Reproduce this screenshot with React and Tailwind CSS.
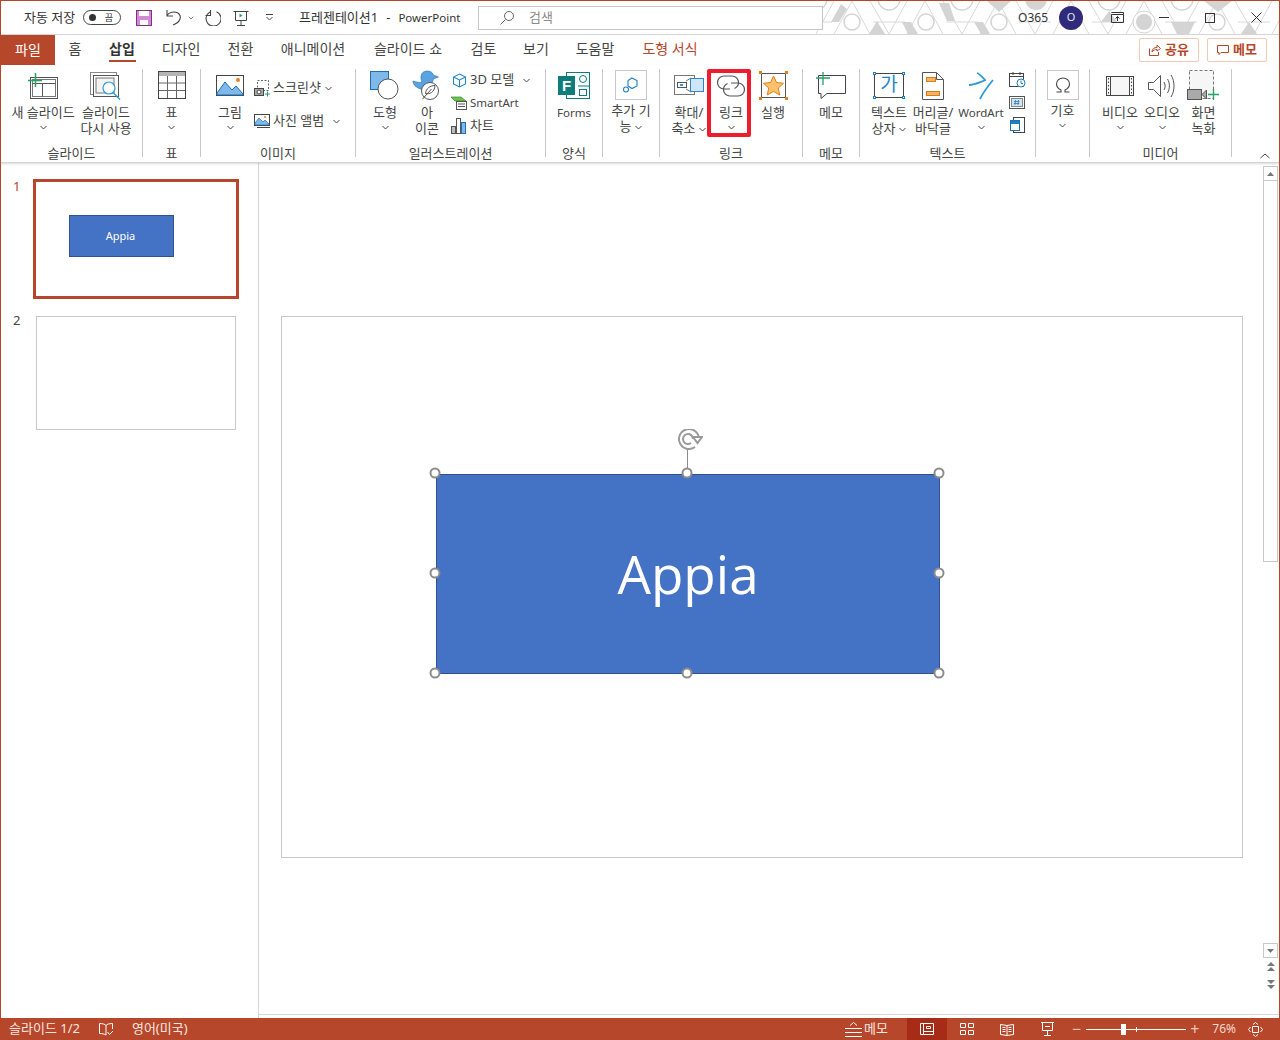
import { ChevronDown } from 'lucide-react';

const FONT = '"Noto Sans", "Noto Sans CJK KR", sans-serif';

const Latin = ({ children }) => <span className="text-[11.5px]">{children}</span>;

const Chev = ({ className = '' }) => (
    <svg width="7" height="5" viewBox="0 0 7 5" className={`inline-block ${className}`}>
        <path d="M.5 1 3.5 4 6.5 1" fill="none" stroke="#444" strokeWidth="1" />
    </svg>
);

const Btn = ({ w, icon, lines, chev, inline, top = 35 }) => (
    <div className="flex flex-col items-center shrink-0" style={{ width: w }}>
        <div className="flex items-center justify-center w-full pb-0.5" style={{ height: top }}>{icon}</div>
        {lines.map((l, i) => (
            <div key={i} className="h-4 leading-4 whitespace-nowrap">
                {l}{inline && i === lines.length - 1 && <Chev className="ml-1 align-middle" />}
            </div>
        ))}
        {chev && <div className="h-4 leading-3"><Chev /></div>}
    </div>
);

const Small = ({ icon, label, chev, className = '' }) => (
    <div className={`flex items-center h-5 whitespace-nowrap ${className}`}>
        <span className="w-5 flex justify-center mr-px">{icon}</span>
        {label}
        {chev}
    </div>
);

const Group = ({ w, label, children, last }) => (
    <div className={`h-[88px] shrink-0 ${last ? '' : 'border-r border-[#c8c8c8]'}`} style={{ width: w }}>
        <div className="h-[76px] flex">{children}</div>
        <div className="h-4 leading-4 text-center">{label}</div>
    </div>
);

const NewSlideIcon = () => (
    <svg width="32" height="28" viewBox="0 0 32 28">
        <rect x="3.5" y="5.5" width="27" height="21" fill="#fff" stroke="#555" />
        <rect x="5.5" y="7.5" width="23" height="17" fill="none" stroke="#777" />
        <path d="M5.5 11.5h23M15.5 11.5v13" stroke="#555" fill="none" />
        <path d="M1 8.5h14M8.5 1v14" stroke="#21a366" strokeWidth="1.5" />
    </svg>
);
const ReuseIcon = () => (
    <svg width="32" height="30" viewBox="0 0 32 30">
        <rect x="0.5" y="1.5" width="26" height="22" fill="none" stroke="#888" />
        <rect x="3.5" y="4.5" width="25" height="21" fill="#fff" stroke="#555" />
        <rect x="6" y="7" width="18" height="15" fill="#f3f3f3" stroke="#777" />
        <circle cx="19" cy="17" r="6" fill="#fff" stroke="#2e9bd6" strokeWidth="1.2" />
        <path d="m23 21.5 7 7" stroke="#2e9bd6" strokeWidth="1.4" />
    </svg>
);
const TableIcon = () => (
    <svg width="28" height="29" viewBox="0 0 28 29">
        <rect x="0.5" y="0.5" width="27" height="27" fill="#fff" stroke="#444" />
        <rect x="1" y="1" width="26" height="4" fill="#b5b5b5" />
        <path d="M1 12h26M1 19.5h26M9.5 5v22M18.5 5v22" stroke="#666" fill="none" />
    </svg>
);
const PictureIcon = () => (
    <svg width="28" height="22" viewBox="0 0 28 22">
        <rect x="0.5" y="0.5" width="27" height="20" fill="#fff" stroke="#444" />
        <path d="M1 18 9 7l7 8 4-4 7 8v1H1z" fill="#7fb8ea" stroke="#1f6fb2" />
        <circle cx="22" cy="5" r="2" fill="#e8801f" />
    </svg>
);
const ScreenshotIcon = () => (
    <svg width="16" height="17" viewBox="0 0 16 17">
        <rect x="3.5" y="0.5" width="11" height="10" fill="none" stroke="#666" strokeDasharray="2 1.5" />
        <rect x="0.5" y="8.5" width="9" height="7" fill="#aaa" stroke="#444" />
        <circle cx="5" cy="12" r="2" fill="#fff" stroke="#444" />
        <path d="M11 14h5M13.5 11.5v5" stroke="#21a366" />
    </svg>
);
const AlbumIcon = () => (
    <svg width="16" height="14" viewBox="0 0 16 14">
        <rect x="0.5" y="0.5" width="15" height="11" fill="#fff" stroke="#444" />
        <path d="M1 9 5 4l4 4 2-2 4 4v1H1z" fill="#7fb8ea" stroke="#1f6fb2" strokeWidth=".7" />
        <circle cx="11" cy="3" r="1" fill="#e8801f" />
        <path d="M3 13.5h13" stroke="#444" />
    </svg>
);
const ShapeIcon = () => (
    <svg width="30" height="30" viewBox="0 0 30 30">
        <rect x="0.5" y="0.5" width="18" height="18" fill="#7fb8ea" stroke="#1f6fb2" />
        <circle cx="18" cy="18" r="10" fill="#fff" stroke="#555" />
    </svg>
);
const IconsIcon = () => (
    <svg width="30" height="31" viewBox="0 0 30 31">
        <path d="M1 11c3 1 7 2 9 1-1-2-1-3-1-5C9 3 12 1 15.5 1c3 0 5 1.5 6 4l5 2-5 2c-1 4-3 7-6 9-2 2-4 3-7 1C3 17 1 14 1 11z" fill="#5ba3e0" stroke="#1f6fb2" strokeWidth=".6" />
        <circle cx="18" cy="21" r="8.5" fill="#fff" stroke="#555" />
        <path d="M23 15.5c-5 0-9 3-9.5 8 4 1 9-1 9.5-8zM10.5 29l9-10" stroke="#555" fill="none" />
    </svg>
);
const CubeIcon = () => (
    <svg width="15" height="15" viewBox="0 0 15 15" fill="none" stroke="#1f86c8" strokeWidth="1.1">
        <path d="M7.5 1 13.5 4v7l-6 3-6-3V4zM1.5 4l6 3 6-3M7.5 7v7" />
    </svg>
);
const SmartArtIcon = () => (
    <svg width="18" height="14" viewBox="0 0 18 14">
        <path d="M1 1h10l5 4H5z" fill="#6cc24a" stroke="#2f8a3a" strokeWidth=".7" />
        <rect x="6.5" y="5.5" width="10" height="8" fill="#fff" stroke="#555" />
        <path d="M8 8h7M8 10.5h7" stroke="#555" />
    </svg>
);
const ChartIcon = () => (
    <svg width="16" height="16" viewBox="0 0 16 16">
        <rect x="0.5" y="8.5" width="4" height="7" fill="#bbb" stroke="#555" />
        <rect x="5.5" y="0.5" width="4" height="15" fill="#fff" stroke="#555" />
        <rect x="10.5" y="4.5" width="4" height="11" fill="#7fb8ea" stroke="#1f6fb2" />
    </svg>
);
const FormsIcon = () => (
    <svg width="32" height="28" viewBox="0 0 32 28">
        <rect x="8.5" y="0.5" width="23" height="26" fill="#fff" stroke="#0e7c7b" />
        <path d="M20 14h11" stroke="#0e7c7b" />
        <circle cx="25" cy="7" r="3.5" fill="#fff" stroke="#0e7c7b" />
        <rect x="21.5" y="17.5" width="7" height="6" fill="#fff" stroke="#0e7c7b" />
        <rect x="0" y="4" width="17" height="19" fill="#0e7c7b" />
        <text x="8.5" y="19" fontSize="15" fontWeight="700" fill="#fff" textAnchor="middle" fontFamily="Liberation Sans">F</text>
    </svg>
);
const AddinIcon = () => (
    <div className="w-8 h-[30px] border border-[#c8c8c8] flex items-center justify-center">
        <svg width="18" height="18" viewBox="0 0 18 18" fill="none" stroke="#1f7fc4" strokeWidth="1.1">
            <path d="m10 2 5 2.5V10l-5 2.5L6 10V4.500z" />
            <circle cx="4" cy="13.5" r="2.5" fill="#fff" />
        </svg>
    </div>
);
const ZoomIcon = () => (
    <svg width="30" height="21" viewBox="0 0 30 21">
        <rect x="0.5" y="0.5" width="20" height="19" fill="#fff" stroke="#777" />
        <path d="M12 6 17 3M12 14l5 3" stroke="#777" />
        <rect x="3.5" y="7.5" width="9" height="5" fill="#fff" stroke="#555" />
        <rect x="6" y="9" width="3" height="2" fill="#2e9bd6" />
        <rect x="16.5" y="3.5" width="13" height="13" fill="#cfe6f7" stroke="#2e86c8" />
    </svg>
);
const LinkIcon = () => (
    <svg width="30" height="22" viewBox="0 0 30 22" fill="none" stroke="#555" strokeWidth="1.2">
        <path d="M14 14H8A6.5 6.5 0 0 1 8 1h8a6.5 6.5 0 0 1 6.5 6.5c0 3-2 5-4 6" />
        <path d="M15 8h7a6.5 6.5 0 0 1 0 13h-8a6.5 6.5 0 0 1-6.5-6.5c0-3 2-5 4-6" />
    </svg>
);
const ActionIcon = () => (
    <svg width="29" height="29" viewBox="0 0 29 29">
        <rect x="2.5" y="2.5" width="24" height="24" fill="#fff" stroke="#555" />
        <path d="m14.5 5 3 6.5 7 .8-5.2 4.700 1.400 7-6.200-3.500-6.200 3.500 1.400-7L4.500 12.300l7-.8z" fill="#fbc26b" stroke="#e0801f" />
        <g fill="#e0801f"><rect width="3" height="3" /><rect x="26" width="3" height="3" /><rect y="26" width="3" height="3" /><rect x="26" y="26" width="3" height="3" /></g>
    </svg>
);
const CommentIcon = () => (
    <svg width="30" height="28" viewBox="0 0 30 28">
        <path d="M2.5 3.5h27v18H11l-6 5v-5H2.500z" fill="#fff" stroke="#444" />
        <path d="M0 6h14M7 0v13" stroke="#21a366" strokeWidth="1.3" />
    </svg>
);
const TextBoxIcon = () => (
    <div className="relative w-8 h-7">
        <svg width="32" height="28" viewBox="0 0 32 28">
            <rect x="1.5" y="1.5" width="29" height="24" fill="#fff" stroke="#444" />
            <g fill="#fff" stroke="#1f7fc4"><rect x="0.5" y="0.5" width="2" height="2" /><rect x="29.5" y="0.5" width="2" height="2" /><rect x="0.5" y="24.5" width="2" height="2" /><rect x="29.5" y="24.5" width="2" height="2" /></g>
        </svg>
        <span className="absolute inset-0 flex items-center justify-center pb-0.5 text-[19px] leading-none text-[#1f86c8]">가</span>
    </div>
);
const HeaderIcon = () => (
    <svg width="22" height="28" viewBox="0 0 22 28">
        <path d="M.5.5h14l7 7v20H.5z" fill="#fff" stroke="#555" />
        <path d="M14.5.5v7h7" fill="none" stroke="#555" />
        <rect x="4.5" y="5.5" width="9" height="4" fill="#f5b461" stroke="#d97a1b" />
        <rect x="4.5" y="19.5" width="13" height="4" fill="#f5b461" stroke="#d97a1b" />
    </svg>
);
const WordArtIcon = () => (
    <svg width="26" height="28" viewBox="0 0 26 28" fill="none" stroke="#2e9bd6" strokeWidth="1.8">
        <path d="M9 1c3 1 5 4 8 7M1 13c6 0 11-3 17-5M25 8c-5 6-10 13-13 19" />
    </svg>
);
const DateIcon = () => (
    <svg width="17" height="16" viewBox="0 0 17 16">
        <rect x="0.5" y="1.5" width="14" height="13" fill="#fff" stroke="#444" />
        <path d="M1 4.5h13M4 0v3M11 0v3" stroke="#444" />
        <circle cx="12" cy="11" r="4" fill="#fff" stroke="#1f7fc4" />
        <path d="M12 8.5v3h2" stroke="#1f7fc4" fill="none" />
    </svg>
);
const NumberIcon = () => (
    <svg width="16" height="13" viewBox="0 0 16 13">
        <rect x="0.5" y="0.5" width="15" height="12" fill="#fff" stroke="#555" />
        <rect x="2.5" y="2.5" width="11" height="8" fill="#cfe6f7" stroke="#888" />
        <path d="M6.5 4 6 9M9.5 4 9 9M5 5.5h5.5M4.8 7.5h5.5" stroke="#1f6fb2" strokeWidth=".7" />
    </svg>
);
const ObjectIcon = () => (
    <svg width="15" height="17" viewBox="0 0 15 17">
        <rect x="3.5" y="0.5" width="11" height="15" fill="#fff" stroke="#444" />
        <rect x="0.5" y="3.5" width="9" height="10" fill="#fff" stroke="#1f6fb2" />
        <rect x="1" y="4" width="8" height="3" fill="#1f7fc4" />
    </svg>
);
const OmegaIcon = () => (
    <div className="w-8 h-[30px] border border-[#c8c8c8] flex items-center justify-center">
        <svg width="16" height="16" viewBox="0 0 16 16" fill="none" stroke="#444" strokeWidth="1.1">
            <path d="M1.5 15H6v-2C3 11.5 1.5 9.5 1.5 7c0-3.5 3-6 6.5-6s6.5 2.5 6.5 6c0 2.500-1.500 4.500-4.500 6v2h4.500" />
        </svg>
    </div>
);
const VideoIcon = () => (
    <svg width="28" height="20" viewBox="0 0 28 20">
        <rect x="0.5" y="0.5" width="27" height="19" fill="#f6f6f6" stroke="#444" />
        <path d="M4.5 1v18M23.5 1v18" stroke="#444" />
        <path d="M2.5 2v16M25.5 2v16" stroke="#444" strokeDasharray="1.5 2" />
    </svg>
);
const AudioIcon = () => (
    <svg width="28" height="26" viewBox="0 0 28 26" fill="none" stroke="#555">
        <path d="M.5 9.5h5l7-7v21l-7-7h-5z" fill="#fff" />
        <path d="M16 9c1.500 2.500 1.500 5.500 0 8M19.500 6c2.500 4 2.500 10 0 14M23 2c4 6 4 16 0 22" />
    </svg>
);
const RecordIcon = () => (
    <svg width="33" height="31" viewBox="0 0 33 31">
        <rect x="2.5" y="0.5" width="24" height="28" fill="#f6f6f6" stroke="#777" strokeDasharray="3 2" />
        <rect x="0.5" y="19.5" width="14" height="10" fill="#aaa" stroke="#555" />
        <path d="M15 24.5 19.5 20v9z" fill="#aaa" stroke="#555" />
        <path d="M21 24.5h11M26.5 19v11" stroke="#21a366" strokeWidth="1.3" />
    </svg>
);

const Handle = ({ className }) => (
    <div className={`absolute w-[11px] h-[11px] rounded-full bg-white border-2 border-[#8c8c8c] -translate-x-1/2 -translate-y-1/2 ${className}`} />
);

const TABS = [
    ['홈', 40], ['삽입', 54], ['디자인', 64], ['전환', 55], ['애니메이션', 90],
    ['슬라이드 쇼', 100], ['검토', 51], ['보기', 54], ['도움말', 64], ['도형 서식', 86],
];

// title bar backdrop, drawn with x measured from 817
const GREYS = [
    'M15 21 25 3l6 5-8 13z', 'M53 33l8-13 8 13z', 'M86 21h9l7 12H92z', 'M123 2h10l6 18h-8z',
    'M158 21h9l7 12h-9z', 'M171 0h24l-12 11z', 'M285 21l8-11 8 11z', 'M355 21h24l-6 12h-12z',
    'M388 0h28l-14 11z', 'M425 33l8-12 8 12z',
];
const RINGS = [36, 110, 183, 401];
const TOPS = [0, 73, 146, 293, 366];

const TitlePattern = () => (
    <svg className="absolute right-0 top-0" width="463" height="33" viewBox="0 0 463 33">
        <defs>
            <pattern id="hex" width="73" height="33" patternUnits="userSpaceOnUse">
                <path d="M0 33 18 0M54 0l19 33M18 33 36 0l18 33M0 21h16M57 21h16" fill="none" stroke="#d9d9d9" />
            </pattern>
        </defs>
        <rect width="463" height="33" fill="url(#hex)" />
        {GREYS.map(d => <path key={d} d={d} fill="#d4d4d4" />)}
        {RINGS.map(x => <circle key={x} cx={x} cy="21" r="8" fill="#fff" stroke="#d4d4d4" strokeWidth="1.5" />)}
        {TOPS.map(x => <circle key={x} cx={x} cy="-2" r="11" fill="#fff" stroke="#d4d4d4" strokeWidth="1.5" />)}
        <circle cx="220" cy="-2" r="11" fill="#d4d4d4" />
        <circle cx="328" cy="21" r="11" fill="#fff" stroke="#d4d4d4" />
        <circle cx="328" cy="21" r="8" fill="#d4d4d4" />
    </svg>
);

export default function App() {
    return (
        <div className="w-[1280px] h-[1040px] flex flex-col bg-white text-[13px] text-[#444] overflow-hidden border-x border-[#b7472a]" style={{ fontFamily: FONT }}>
            {/* title bar */}
            <div className="relative h-[35px] shrink-0 border-t border-b border-t-[#b7472a] border-b-[#d6d6d6] flex items-center text-[#333]">
                <TitlePattern />
                <span className="ml-[23px] w-[53px] whitespace-nowrap">자동 저장</span>
                <div className="ml-[6px] w-[38px] h-[15px] rounded-full border border-[#444] flex items-center justify-between pl-[5px] pr-[7px]">
                    <span className="w-[7px] h-[7px] rounded-full bg-[#333]" />
                    <span className="text-[9px] leading-none">끔</span>
                </div>
                <svg className="ml-[15px]" width="16" height="16" viewBox="0 0 16 16">
                    <rect x="0.5" y="0.5" width="15" height="15" fill="#d38ad6" stroke="#80307f" />
                    <rect x="3" y="1" width="10" height="5" fill="#fff" />
                    <rect x="4" y="10" width="8" height="5" fill="#fff" />
                </svg>
                <svg className="ml-[14px]" width="16" height="17" viewBox="0 0 16 17" fill="none" stroke="#444" strokeWidth="1.1">
                    <path d="M1 1v6h6M1 6.5C3 3 8 2 12 4c4 3 3 9-5 12" />
                </svg>
                <ChevronDown size={8} className="ml-[5px]" strokeWidth={2} />
                <svg className="ml-[9px]" width="17" height="17" viewBox="0 0 17 17" fill="none" stroke="#444" strokeWidth="1.1">
                    <path d="M6.5 1v5.5H1.5M6 3A7.5 7.5 0 1 0 12.5 2.7" />
                </svg>
                <svg className="ml-[12px]" width="16" height="16" viewBox="0 0 16 16">
                    <path d="M.5 1.5h15M2.5 1.5v9h11v-9M8 10.5V15M4 15.5h8" fill="none" stroke="#444" />
                    <path d="M6.5 3.5v4l3-2z" fill="#21a366" />
                </svg>
                <svg className="ml-[16px]" width="9" height="7" viewBox="0 0 9 7" fill="none" stroke="#444">
                    <path d="M1 .5h7M1.5 3 4.5 6l3-3" />
                </svg>
                <span className="ml-[25px] whitespace-nowrap">프레젠테이션1</span>
                <span className="ml-[8px]">-</span>
                <span className="ml-[8px] text-[11.5px]">PowerPoint</span>
                <div className="absolute left-[477px] top-[5px] w-[345px] h-6 border border-[#c6c6c6] bg-white flex items-center pl-5 text-[#8a8a8a]">
                    <svg width="16" height="16" viewBox="0 0 16 16" fill="none" stroke="#666">
                        <circle cx="10" cy="6" r="4.5" />
                        <path d="m6.5 9.5-5 5" />
                    </svg>
                    <span className="ml-[14px]">검색</span>
                </div>
                <div className="relative ml-auto flex items-center text-[12px]">
                    <span>O365</span>
                    <span className="ml-[11px] w-6 h-6 rounded-full bg-[#2f2a7a] text-[#dfe4ff] flex items-center justify-center text-[11px]">O</span>
                    <svg className="ml-[28px]" width="13" height="11" viewBox="0 0 13 11" fill="none" stroke="#333">
                        <path d="M.5 2.5h12v8H.5zM.5.5h12v2M6.5 9V4.5M4.5 6.5l2-2 2 2" />
                    </svg>
                    <svg className="ml-[35px]" width="10" height="2" viewBox="0 0 10 2"><path d="M0 .5h10" stroke="#333" /></svg>
                    <svg className="ml-[36px]" width="10" height="10" viewBox="0 0 10 10"><rect x="0.5" y="0.5" width="9" height="9" fill="none" stroke="#333" /></svg>
                    <svg className="ml-[36px] mr-[17px]" width="11" height="11" viewBox="0 0 11 11"><path d="m.5.5 10 10m0-10-10 10" stroke="#333" /></svg>
                </div>
            </div>

            {/* tabs */}
            <div className="h-[30px] shrink-0 flex text-[14px] relative">
                <div className="w-[54px] bg-[#b7472a] text-white flex items-center justify-center pb-0.5">파일</div>
                {TABS.map(([t, w]) => (
                    <div key={t} className="relative flex items-center justify-center whitespace-nowrap pb-1" style={{ width: w }}>
                        <span className={t === '삽입' ? 'font-bold text-[#333]' : t === '도형 서식' ? 'text-[#b7472a]' : ''}>{t}</span>
                        {t === '삽입' && <div className="absolute bottom-[3px] left-[14px] right-[13px] h-[2px] bg-[#b7472a]" />}
                    </div>
                ))}
                <div className="ml-auto flex items-center gap-2 mr-3 font-bold text-[13px] text-[#b7472a]">
                    <div className="w-[60px] h-[24px] border border-[#f4c9ba] rounded-[2px] flex items-center justify-center gap-1">
                        <svg width="12" height="12" viewBox="0 0 12 12" fill="none" stroke="#b7472a"><path d="M.5 4.5v7h9V8M3 8c0-3 2-4.5 5-4.5V1l3.5 3.5L8 7V5.5C6 5.5 4.5 6 3 8z" /></svg>
                        공유
                    </div>
                    <div className="w-[60px] h-[24px] border border-[#f4c9ba] rounded-[2px] flex items-center justify-center gap-1">
                        <svg width="12" height="12" viewBox="0 0 12 12" fill="none" stroke="#b7472a"><path d="M.5 1.5h11v7H4l-2 2v-2H.5z" /></svg>
                        메모
                    </div>
                </div>
            </div>

            {/* ribbon */}
            <div className="relative h-[98px] shrink-0 pt-1 flex border-b border-[#d2d2d2] shadow-[0_1px_2px_rgba(0,0,0,0.15)] z-10 bg-white">
                <Group w={142} label="슬라이드">
                    <div className="w-[7px]" />
                    <Btn w={70} icon={<NewSlideIcon />} lines={['새 슬라이드']} chev />
                    <Btn w={56} icon={<ReuseIcon />} lines={['슬라이드', '다시 사용']} />
                </Group>
                <Group w={58} label="표">
                    <Btn w={57} icon={<TableIcon />} lines={['표']} chev />
                </Group>
                <Group w={155} label="이미지">
                    <div className="w-[7px]" />
                    <Btn w={44} icon={<PictureIcon />} lines={['그림']} chev />
                    <div className="pt-[9px] flex flex-col gap-[13px]">
                        <Small icon={<ScreenshotIcon />} label="스크린샷" chev={<Chev className="ml-1" />} />
                        <Small icon={<AlbumIcon />} label="사진 앨범" chev={<Chev className="ml-[9px]" />} />
                    </div>
                </Group>
                <Group w={190} label="일러스트레이션">
                    <div className="w-[9px]" />
                    <Btn w={40} icon={<ShapeIcon />} lines={['도형']} chev />
                    <Btn w={44} icon={<IconsIcon />} lines={['아', '이콘']} />
                    <div className="pt-[1px] flex flex-col gap-[3px]">
                        <Small icon={<CubeIcon />} label="3D 모델" chev={<Chev className="ml-[9px]" />} />
                        <Small icon={<SmartArtIcon />} label={<Latin>SmartArt</Latin>} />
                        <Small icon={<ChartIcon />} label="차트" />
                    </div>
                </Group>
                <Group w={57} label="양식">
                    <Btn w={56} icon={<FormsIcon />} lines={[<Latin key="f">Forms</Latin>]} />
                </Group>
                <Group w={57} label="">
                    <Btn w={56} top={33} icon={<AddinIcon />} lines={['추가 기', '능']} inline />
                </Group>
                <Group w={143} label="링크">
                    <div className="w-2" />
                    <Btn w={42} icon={<ZoomIcon />} lines={['확대/', '축소']} inline />
                    <Btn w={42} icon={<LinkIcon />} lines={['링크']} chev />
                    <Btn w={42} icon={<ActionIcon />} lines={['실행']} />
                </Group>
                <Group w={57} label="메모">
                    <Btn w={56} icon={<CommentIcon />} lines={['메모']} />
                </Group>
                <Group w={176} label="텍스트">
                    <div className="w-2" />
                    <Btn w={42} icon={<TextBoxIcon />} lines={['텍스트', '상자']} inline />
                    <Btn w={46} icon={<HeaderIcon />} lines={['머리글/', '바닥글']} />
                    <Btn w={50} icon={<WordArtIcon />} lines={[<Latin key="w">WordArt</Latin>]} chev />
                    <div className="ml-[2px] pt-[3px] w-[18px] flex flex-col items-center gap-2">
                        <DateIcon /><NumberIcon /><ObjectIcon />
                    </div>
                </Group>
                <Group w={54} label="">
                    <Btn w={53} top={33} icon={<OmegaIcon />} lines={['기호']} chev />
                </Group>
                <Group w={142} label="미디어">
                    <div className="w-[9px]" />
                    <Btn w={42} icon={<VideoIcon />} lines={['비디오']} chev />
                    <Btn w={42} icon={<AudioIcon />} lines={['오디오']} chev />
                    <Btn w={41} icon={<RecordIcon />} lines={['화면', '녹화']} />
                </Group>
                {/* red highlight over the link button */}
                <div className="absolute left-[706px] top-[4px] w-11 h-[68px] border-[4px] border-[#ee1c2d] rounded-[2px]" />
                <svg className="absolute left-[1259px] top-[88px]" width="10" height="6" viewBox="0 0 10 6" fill="none" stroke="#444"><path d="m.5 5 4.5-4 4.5 4" /></svg>
            </div>

            {/* workspace */}
            <div className="flex-1 flex min-h-0">
                <div className="w-[258px] shrink-0 border-r border-[#d6d6d6] pt-[16px]">
                    <div className="flex">
                        <span className="ml-3 w-5 text-[#b7472a] text-[13px] leading-4 -mt-px">1</span>
                        <div className="w-[206px] h-[120px] border-[3px] border-[#b7472a] pt-[33px] pl-[33px]">
                            <div className="w-[105px] h-[42px] bg-[#4472c4] border border-[#2f528f] text-white text-[11px] flex items-center justify-center pt-px pr-0.5">Appia</div>
                        </div>
                    </div>
                    <div className="flex mt-[17px]">
                        <span className="ml-3 w-[23px] text-[13px] leading-4 -mt-1">2</span>
                        <div className="w-[200px] h-[114px] border border-[#c8c8c8]" />
                    </div>
                </div>
                <div className="flex-1 flex flex-col min-w-0">
                    <div className="flex-1 flex min-h-0">
                        <div className="flex-1 pt-[153px] pl-[22px]">
                            <div className="relative w-[962px] h-[542px] border border-[#c8c8c8] bg-white">
                                <div className="absolute left-[154px] top-[157px] w-[504px] h-[200px] bg-[#4472c4] border border-[#2f528f] text-white text-[53px] flex items-center justify-center pb-px" style={{ fontFamily: '"Open Sans", sans-serif' }}>Appia</div>
                                <div className="absolute left-[405px] top-[132px] w-px h-[25px] bg-[#8c8c8c]" />
                                <svg className="absolute left-[395px] top-[112px]" width="26" height="22" viewBox="0 0 26 22" fill="none" stroke="#9a9a9a" strokeWidth="2">
                                    <path d="M22 10a10 10 0 1 0-4 8" />
                                    <path d="M16 10a5 5 0 1 0-2 4" />
                                    <path d="M16 8h9l-4.5 6z" fill="#fff" />
                                </svg>
                                <Handle className="left-[153px] top-[156px]" />
                                <Handle className="left-[405px] top-[156px]" />
                                <Handle className="left-[657px] top-[156px]" />
                                <Handle className="left-[153px] top-[256px]" />
                                <Handle className="left-[657px] top-[256px]" />
                                <Handle className="left-[153px] top-[356px]" />
                                <Handle className="left-[405px] top-[356px]" />
                                <Handle className="left-[657px] top-[356px]" />
                            </div>
                        </div>
                        {/* scrollbar */}
                        <div className="w-[17px] shrink-0 flex flex-col items-center pt-[3px] bg-white">
                            <div className="w-[15px] h-[15px] border border-[#c8c8c8] flex items-center justify-center">
                                <svg width="7" height="4" viewBox="0 0 7 4"><path d="M3.5 0 7 4H0z" fill="#777" /></svg>
                            </div>
                            <div className="w-[15px] h-[381px] border-x border-b border-[#c8c8c8]" />
                            <div className="flex-1" />
                            <div className="w-[15px] h-[15px] border border-[#c8c8c8] flex items-center justify-center">
                                <svg width="7" height="4" viewBox="0 0 7 4"><path d="M0 0h7L3.5 4z" fill="#777" /></svg>
                            </div>
                            <svg className="mt-1" width="8" height="9" viewBox="0 0 8 9"><path d="M0 4 4 0l4 4zM0 9l4-4 4 4z" fill="#777" /></svg>
                            <svg className="mt-[9px] mb-[25px]" width="8" height="9" viewBox="0 0 8 9"><path d="M0 0h8L4 4zM0 5h8L4 9z" fill="#777" /></svg>
                        </div>
                    </div>
                    <div className="h-[4px] shrink-0 border-t border-[#d6d6d6]" />
                </div>
            </div>

            {/* status bar */}
            <div className="h-[22px] shrink-0 -mx-px bg-[#b7472a] text-[#f8e6e0] flex items-center text-[13px]">
                <span className="ml-[9px] whitespace-nowrap">슬라이드 1/2</span>
                <svg className="ml-[19px]" width="15" height="13" viewBox="0 0 15 13" fill="none" stroke="#fff">
                    <path d="M7 2.5C6 1 3 .5.5.5v10c2.5 0 5 .5 6.5 1.5M7 2.5C8 1 11 .5 13.5.5V6M7 2.5V12M8.5 9l2 2.5 3.5-3.5" />
                </svg>
                <span className="ml-[18px] whitespace-nowrap">영어(미국)</span>
                <div className="ml-auto flex items-center h-full">
                    <svg width="17" height="15" viewBox="0 0 17 15" fill="none" stroke="#fff">
                        <path d="M0 6.5h17M0 10.5h17M0 14.5h17M5 3.5l3.5-3 3.5 3" />
                    </svg>
                    <span className="ml-[2px] mr-[19px]">메모</span>
                    <div className="w-10 h-full bg-[#a62c18] flex items-center justify-center">
                        <svg width="14" height="12" viewBox="0 0 14 12" fill="none" stroke="#fff"><path d="M.5.5h13v11H.5zM3.5.5v11M3.5 8.5h10M6.5 3.5h4v2h-4z" /></svg>
                    </div>
                    <svg className="ml-[13px]" width="14" height="12" viewBox="0 0 14 12" fill="none" stroke="#fff"><path d="M.5.5h5v4h-5zM8.5.5h5v4h-5zM.5 7.5h5v4h-5zM8.5 7.5h5v4h-5z" /></svg>
                    <svg className="ml-[26px]" width="14" height="13" viewBox="0 0 14 13" fill="none" stroke="#fff"><path d="M.5 1.5 7 2.5l6.5-1v10l-6.5 1-6.5-1zM7 2.5v10M2.5 4.5h3M2.500 6.5h3M2.5 8.5h3M8.5 4.5h3M8.5 6.5h3M8.5 8.5h3" /></svg>
                    <svg className="ml-[27px]" width="13" height="14" viewBox="0 0 13 14" fill="none" stroke="#fff"><path d="M0 .5h13M1.5.5v8h10v-8M6.5 8.5v5M3 13.5h7M4 4.5h5" /></svg>
                    <span className="ml-[18px] text-[16px] leading-none text-[#f0c4b6]">−</span>
                    <div className="relative ml-[5px] w-[100px] h-px bg-white">
                        <div className="absolute left-[35px] -top-[5px] w-[5px] h-[11px] bg-white" />
                        <div className="absolute left-[50px] -top-[2px] w-px h-[5px] bg-white" />
                    </div>
                    <span className="ml-[4px] text-[16px] leading-none text-[#f0c4b6]">+</span>
                    <span className="ml-[13px] text-[12px] text-[#f6d8cd]">76%</span>
                    <svg className="ml-[12px] mr-[17px]" width="15" height="15" viewBox="0 0 15 15" fill="none" stroke="#fff"><path d="M4.5 4.5h6v6h-6zM5 2.5 7.5.5 10 2.5M5 12.5l2.5 2 2.5-2M2.5 5 .5 7.5l2 2.5M12.5 5l2 2.5-2 2.5" /></svg>
                </div>
            </div>
        </div>
    );
}
